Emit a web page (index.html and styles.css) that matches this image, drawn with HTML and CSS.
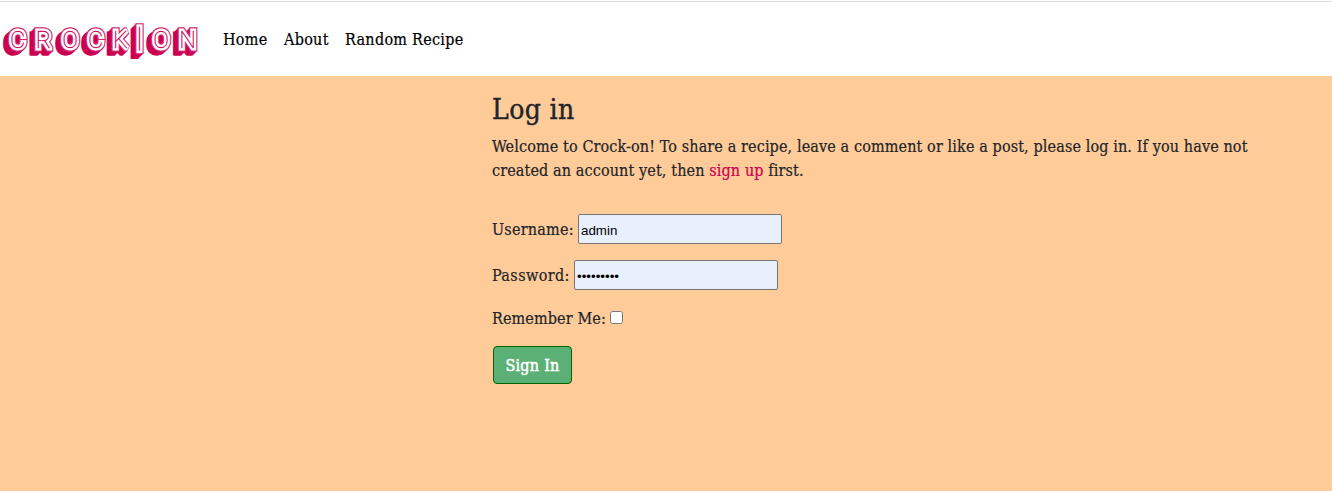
FILE: index.html
```html
<!DOCTYPE html>
<html lang="en">
<head>
<meta charset="utf-8">
<title>Log in</title>
<link rel="stylesheet" href="styles.css">
</head>
<body>
<header class="navbar">
  <a class="brand" href="#" aria-label="Crock-on">
    <svg class="logo" width="206" height="50" viewBox="0 15 206 50">
      <defs>
        <text id="word" y="47.5" x="17.5 43.5 70 95.5 120.5 139.5 161 187.5">CROCK<tspan class="bar" y="47">|</tspan><tspan y="47.5">ON</tspan></text>
      </defs>
      <g class="shade">
        <use href="#word" x="-5" y="4.5"/>
        <use href="#word" x="-4" y="4"/>
        <use href="#word" x="-3" y="3"/>
        <use href="#word" x="-2" y="2"/>
        <use href="#word" x="-1" y="1"/>
      </g>
      <use class="edge" href="#word"/>
      <use class="face" href="#word"/>
      <use class="inline" href="#word"/>
    </svg>
  </a>
  <nav class="links">
    <a class="home" href="#">Home</a>
    <a class="about" href="#">About</a>
    <a class="random" href="#">Random Recipe</a>
  </nav>
</header>
<main class="page">
  <section class="login">
    <h1>Log in</h1>
    <p class="intro"><span class="first-line">Welcome to Crock-on! To share a recipe, leave a comment or like a post, please log in. If you have not</span><br><span class="second-line">created an account yet, then <a href="#">sign up</a> first.</span></p>
    <form>
      <div class="field"><label class="user-label" for="user">Username:</label><input class="text" id="user" type="text" value="admin"></div>
      <div class="field"><label class="pass-label" for="pass">Password:</label><input class="text" id="pass" type="password" value="demodemo1"></div>
      <div class="remember"><label for="remember">Remember Me:</label><input id="remember" type="checkbox"></div>
      <button type="button">Sign In</button>
    </form>
  </section>
</main>
</body>
</html>
```
FILE: styles.css
```css
* { box-sizing: border-box; }
body {
  margin: 0;
  height: 491px;
  display: flex;
  flex-direction: column;
  overflow: hidden;
  background: #fff;
  color: #212529;
  font: 16px/24px "Roboto Slab", "DejaVu Serif Condensed", "DejaVu Serif", serif;
  font-stretch: condensed;
  letter-spacing: 0.12px;
  -webkit-text-stroke: 0.2px currentColor;
  white-space: nowrap;
}
a { color: #cc0052; text-decoration: none; }
.navbar {
  height: 75px;
  margin-top: 1px;
  flex: none;
  display: flex;
  align-items: center;
  border-top: 1px solid #dadada;
}
.brand, .logo { display: block; }
.brand { margin-right: 17px; padding-top: 1px; }
.logo {
  font-family: Roboto, sans-serif;
  font-stretch: normal;
  font-weight: 100;
  font-size: 23.5px;
  letter-spacing: 0;
  -webkit-text-stroke: 0;
  text-anchor: middle;
  stroke-linejoin: miter;
  stroke-miterlimit: 2;
}
.bar { font-size: 27px; }
.shade { fill: #cc0052; stroke: #cc0052; stroke-width: 7px; }
.edge { fill: #cc0052; stroke: #d02b6d; stroke-width: 7.6px; }
.face { fill: #fff; stroke: #fff; stroke-width: 5.2px; }
.inline { fill: #cc0052; stroke: #cc0052; stroke-width: 0.3px; }
.links { display: flex; gap: 16px; padding-top: 2px; letter-spacing: 0.28px; }
.links a { color: #000; }
.home { width: 45px; }
.about { width: 45px; }
.page {
  flex: 1;
  padding: 16px 0 0 492px;
  background: #ffcb99;
}
h1 { margin: 0 0 7px; font-size: 28px; line-height: 36px; font-weight: 400; letter-spacing: 0.4px; -webkit-text-stroke: 0.4px currentColor; }
.intro { margin: 0 0 31px; }
.field { display: flex; align-items: center; gap: 4px; height: 30px; margin-bottom: 16px; }
.field label, .remember label { padding-top: 2px; }
.text {
  width: 204px;
  height: 30px;
  margin: 0;
  padding: 3px 2px 1px;
  border: 1px solid #767676;
  border-radius: 2px;
  background: #e8f0fe;
  color: #000;
  font: 13.333px "Liberation Sans", Arial, sans-serif;
  -webkit-text-stroke: 0;
}
.user-label { width: 82px; letter-spacing: 0.22px; }
.pass-label { width: 78px; letter-spacing: 0.4px; }
.remember { display: flex; align-items: center; height: 24px; margin-bottom: 16px; }
.remember label { width: 118px; }
.remember input { width: 13px; height: 13px; margin: 0 0 2px; }
button {
  display: block;
  width: 79px;
  height: 38px;
  margin-left: 1px;
  padding: 2px 0 0;
  border: 1px solid #006400;
  border-radius: 4px;
  background: #5bb075;
  color: #fff;
  font: inherit;
  letter-spacing: 0.25px;
  -webkit-text-stroke: 0.5px #fff;
}
```
